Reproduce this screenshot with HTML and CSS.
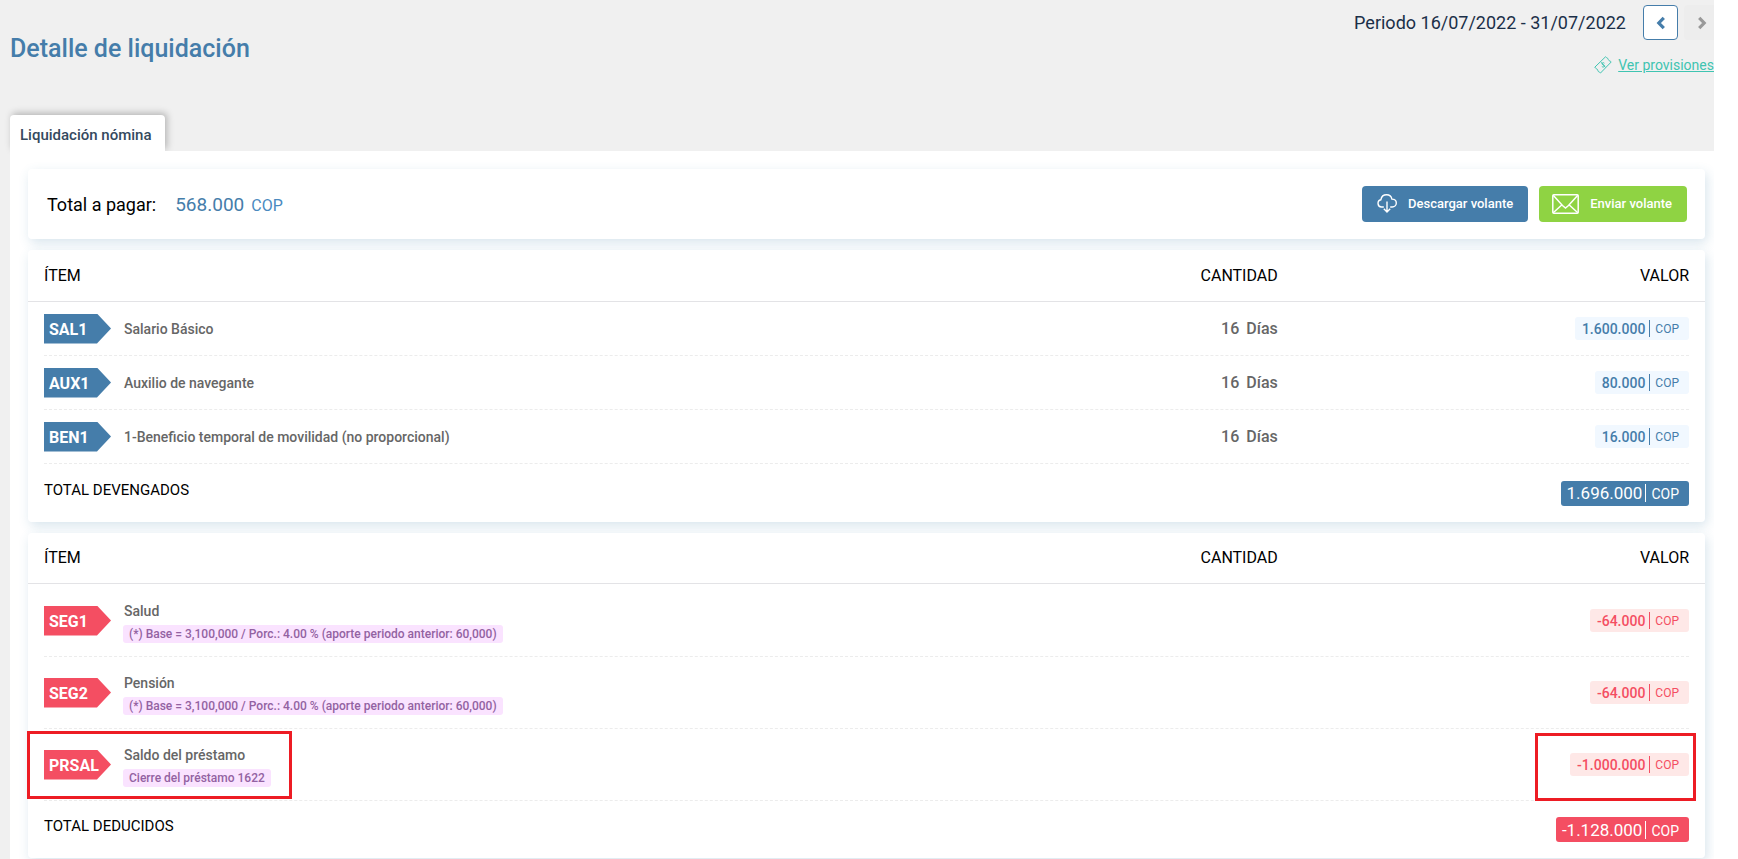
FILE: index.html
```html
<!DOCTYPE html>
<html lang="es">
<head>
<meta charset="utf-8">
<title>Detalle de liquidación</title>
<link rel="stylesheet" href="styles.css">
</head>
<body>
<header class="top">
  <h1 class="title">Detalle de liquidación</h1>
  <div class="tools">
    <div class="period">
      <span class="period-text">Periodo 16/07/2022 - 31/07/2022</span>
      <button class="nav" type="button" aria-label="Periodo anterior"><svg width="12" height="14" viewBox="0 0 12 14"><path d="M8.800 1.800L3.800 7l5 5.200" fill="none" stroke="currentColor" stroke-width="3.200"/></svg></button>
      <button class="nav nav-off" type="button" aria-label="Periodo siguiente" disabled><svg width="12" height="14" viewBox="0 0 12 14"><path d="M3.200 1.800L8.200 7l-5 5.200" fill="none" stroke="currentColor" stroke-width="3.200"/></svg></button>
    </div>
    <a class="provisions" href="#"><svg width="18" height="18" viewBox="0 0 18 18" fill="none" stroke="currentColor"><path d="M.8 11.200L11.500.8c.5.900 1.500.7 2.200 1.500.7.800.5 1.700 1.300 2.300.7.500 1.500.3 2.200 1.400L6.500 17c-.6-.9-1.500-.7-2.200-1.500-.7-.8-.4-1.700-1.200-2.400-.7-.6-1.500-.5-2.300-1.900z"/><path d="M10.400 7.200c-.9-.9-2.600-.4-2.400.7.200 1.100 2.300.7 2.500 1.900.1 1.200-1.600 1.700-2.700.6M7.300 6.300l4 5"/></svg><span>Ver provisiones</span></a>
  </div>
</header>
<nav class="tabs"><button class="tab" type="button">Liquidación nómina</button></nav>
<main class="panel">
  <section class="card summary">
    <span class="sum-label">Total a pagar:</span>
    <span class="sum-value">568.000</span>
    <span class="sum-unit">COP</span>
    <div class="actions">
      <button class="btn" type="button"><svg width="20" height="19" viewBox="0 0 20 19" fill="none" stroke="currentColor" stroke-width="1.400"><path d="M6.800 13H4.500a3.700 3.700 0 0 1-.6-7.300C4.400 2.800 6.800.8 9.600.8c2.700 0 4.800 1.700 5.300 4.300 2.600 0 4.400 1.700 4.400 3.900S17.500 13 15.200 13h-2M10 7.500V18M6.800 14.800L10 18l3.200-3.200"/></svg>Descargar volante</button>
      <button class="btn btn-send" type="button"><svg width="27" height="20" viewBox="0 0 27 20" fill="none" stroke="currentColor" stroke-width="1.500"><rect x=".8" y=".8" width="25.400" height="18.400" rx="1"/><path d="M1.200 1.200l9.300 10.300 3 2.500 3-2.500 9.300-10.300M1.200 18.800l8.800-8M25.800 18.800l-8.800-8"/></svg>Enviar volante</button>
    </div>
  </section>

  <table class="card items">
    <thead><tr><th class="item">ÍTEM</th><th class="qty">CANTIDAD</th><th class="val">VALOR</th></tr></thead>
    <tbody>
      <tr><td class="item"><span class="code">SAL1</span><span class="name">Salario Básico</span></td><td class="qty"><span>16</span><span>Días</span></td><td class="val"><span class="money"><span class="num">1.600.000</span><span class="cur">COP</span></span></td></tr>
      <tr><td class="item"><span class="code">AUX1</span><span class="name">Auxilio de navegante</span></td><td class="qty"><span>16</span><span>Días</span></td><td class="val"><span class="money"><span class="num">80.000</span><span class="cur">COP</span></span></td></tr>
      <tr><td class="item"><span class="code">BEN1</span><span class="name">1-Beneficio temporal de movilidad (no proporcional)</span></td><td class="qty"><span>16</span><span>Días</span></td><td class="val"><span class="money"><span class="num">16.000</span><span class="cur">COP</span></span></td></tr>
    </tbody>
    <tfoot><tr><th class="item">TOTAL DEVENGADOS</th><td class="val"><span class="money total"><span class="num">1.696.000</span><span class="cur">COP</span></span></td></tr></tfoot>
  </table>

  <table class="card items deductions">
    <thead><tr><th class="item">ÍTEM</th><th class="qty">CANTIDAD</th><th class="val">VALOR</th></tr></thead>
    <tbody>
      <tr><td class="item"><span class="code">SEG1</span><span class="name">Salud<span class="note">(*) Base = 3,100,000 / Porc.: 4.00 % (aporte periodo anterior: 60,000)</span></span></td><td class="qty"></td><td class="val"><span class="money"><span class="num">-64.000</span><span class="cur">COP</span></span></td></tr>
      <tr><td class="item"><span class="code">SEG2</span><span class="name">Pensión<span class="note">(*) Base = 3,100,000 / Porc.: 4.00 % (aporte periodo anterior: 60,000)</span></span></td><td class="qty"></td><td class="val"><span class="money"><span class="num">-64.000</span><span class="cur">COP</span></span></td></tr>
      <tr class="marked"><td class="item"><span class="code">PRSAL</span><span class="name">Saldo del préstamo<span class="note">Cierre del préstamo 1622</span></span></td><td class="qty"></td><td class="val"><span class="money"><span class="num">-1.000.000</span><span class="cur">COP</span></span></td></tr>
    </tbody>
    <tfoot><tr><th class="item">TOTAL DEDUCIDOS</th><td class="val"><span class="money total"><span class="num">-1.128.000</span><span class="cur">COP</span></span></td></tr></tfoot>
  </table>
</main>
</body>
</html>
```
FILE: styles.css
```css
*, *::before, *::after { box-sizing: border-box; }
html { background: #fff; }
body {
  margin: 0 24px 0 0;
  background: #f0f0f0;
  font-family: Roboto, "Liberation Sans", sans-serif;
  font-size: 15px;
  color: #000;
}
button { font-family: inherit; cursor: pointer; }
svg { flex: none; }

.top { display: flex; justify-content: space-between; height: 115px; padding-left: 10px; }
.title { margin: 33px 0 0; font-size: 25px; line-height: 32px; font-weight: 500; color: #457daa; }
.tools { display: flex; flex-direction: column; align-items: flex-end; padding-top: 5px; overflow: hidden; }
.period { display: flex; align-items: center; gap: 6px; margin-right: -5px; }
.period-text { margin-right: 11px; font-size: 18px; color: #1b2f48; }
.nav {
  display: flex; align-items: center; justify-content: center;
  width: 35px; height: 35px; padding: 0;
  border: 1px solid #457daa; border-radius: 4px; background: #fff; color: #457daa;
}
.nav-off { border-color: #ededed; background: #ededed; color: #999; }
.provisions { display: flex; align-items: center; gap: 6px; margin-top: 15px; color: #3fc4b1; font-size: 14px; line-height: 20px; white-space: nowrap; text-decoration: none; }
.provisions span { text-decoration: underline; }

.tabs { padding-left: 10px; }
.tab {
  display: block; height: 36px; padding: 4px 13px 0 10px; border: 0; border-radius: 4px 4px 0 0;
  background: #fff; box-shadow: 2px -2px 7px rgba(0, 0, 0, .25);
  font-size: 15px; font-weight: 500; color: #34495e;
}
.panel {
  position: relative;
  display: flex; flex-direction: column; gap: 11px;
  margin: 0 -24px 0 10px; padding: 18px 33px 1px 18px;
  background: #fff;
}
.card { background: #fff; border-radius: 4px; box-shadow: 2px 4px 12px rgba(60, 125, 165, .2); }

.summary { display: flex; align-items: center; height: 70px; padding: 0 18px 0 19px; font-size: 18px; }
.sum-value { margin-left: 19px; font-size: 19px; color: #457daa; }
.sum-unit { margin: 3px 0 0 7px; font-size: 16px; color: #4a8abf; }
.actions { display: flex; gap: 11px; margin-left: auto; }
.btn {
  display: flex; align-items: center; gap: 11px; height: 36px; padding: 0 15px 1px; border: 0; border-radius: 4px;
  background: #457daa; color: #fff; font-size: 13px; font-weight: 500;
}
.btn-send { background: #8fd343; padding-left: 13px; }

.items { display: block; }
.items thead, .items tbody, .items tfoot { display: block; }
.items tr { display: flex; align-items: center; margin: 0 16px; }
.items th, .items td { padding: 0; font-weight: 400; }
.items thead tr { height: 52px; margin: 0; padding: 0 16px; border-bottom: 1px solid #e3e3e6; font-size: 16px; }
.items tbody tr { height: 54px; border-bottom: 1px dashed #ececec; }
.items tfoot tr { height: 58px; }
.items.deductions thead tr { height: 51px; padding-bottom: 1px; }
.items.deductions tbody { padding-top: 1px; }
.items.deductions tbody tr { height: 72px; }
.items.deductions tfoot tr { height: 57px; }
.item { flex: 1; display: flex; align-items: center; text-align: left; }
.qty { text-align: right; }
.val { width: 25%; text-align: right; }
tbody .qty { display: flex; gap: 7px; font-size: 16px; color: #666; }
.items tbody .qty, .name { font-weight: 500; }
.items tfoot .item { padding-bottom: 7px; }

.code {
  width: 67px; height: 30px; margin-right: 13px; padding-left: 5px;
  background: #457daa; color: #fff;
  clip-path: polygon(0 0, 53px 0, 100% 50%, 53px 100%, 0 100%);
  font-size: 16px; font-weight: 700; line-height: 31px;
}
.deductions .code { background: #f44e62; }
.name { font-size: 14px; line-height: 20px; color: #666; }
.deductions .name { padding-top: 2px; }
.note {
  display: block; width: max-content; margin: 4px 0 0 -1px; padding: 0 6px;
  border-radius: 3px; background: #fae3ff; color: #9362a2; font-size: 12px; line-height: 18px;
}

.money { display: inline-flex; align-items: center; height: 23px; padding: 0 10px 0 7px; border-radius: 3px; background: #f1f8ff; color: #457daa; }
.num { font-size: 14px; font-weight: 500; }
.cur { margin-left: 4px; padding: 1px 0 0 5px; border-left: 1px solid currentColor; font-size: 12px; line-height: 16px; }
.deductions .money { background: #fee8e7; color: #f44e62; }
.total { height: 25px; padding-left: 6px; }
.total .num { font-size: 17px; font-weight: 400; }
.total .cur { margin-left: 3px; padding-top: 2px; font-size: 14px; }
.items .total { background: #457daa; color: #fff; }
.items.deductions .total { background: #f44e62; }

.marked { position: relative; }
.marked::before, .marked::after { content: ""; position: absolute; top: 2px; height: 68px; border: 3px solid #ed1c24; }
.marked::before { left: -17px; width: 265px; }
.marked::after { right: -7px; top: 4px; width: 161px; }
```
